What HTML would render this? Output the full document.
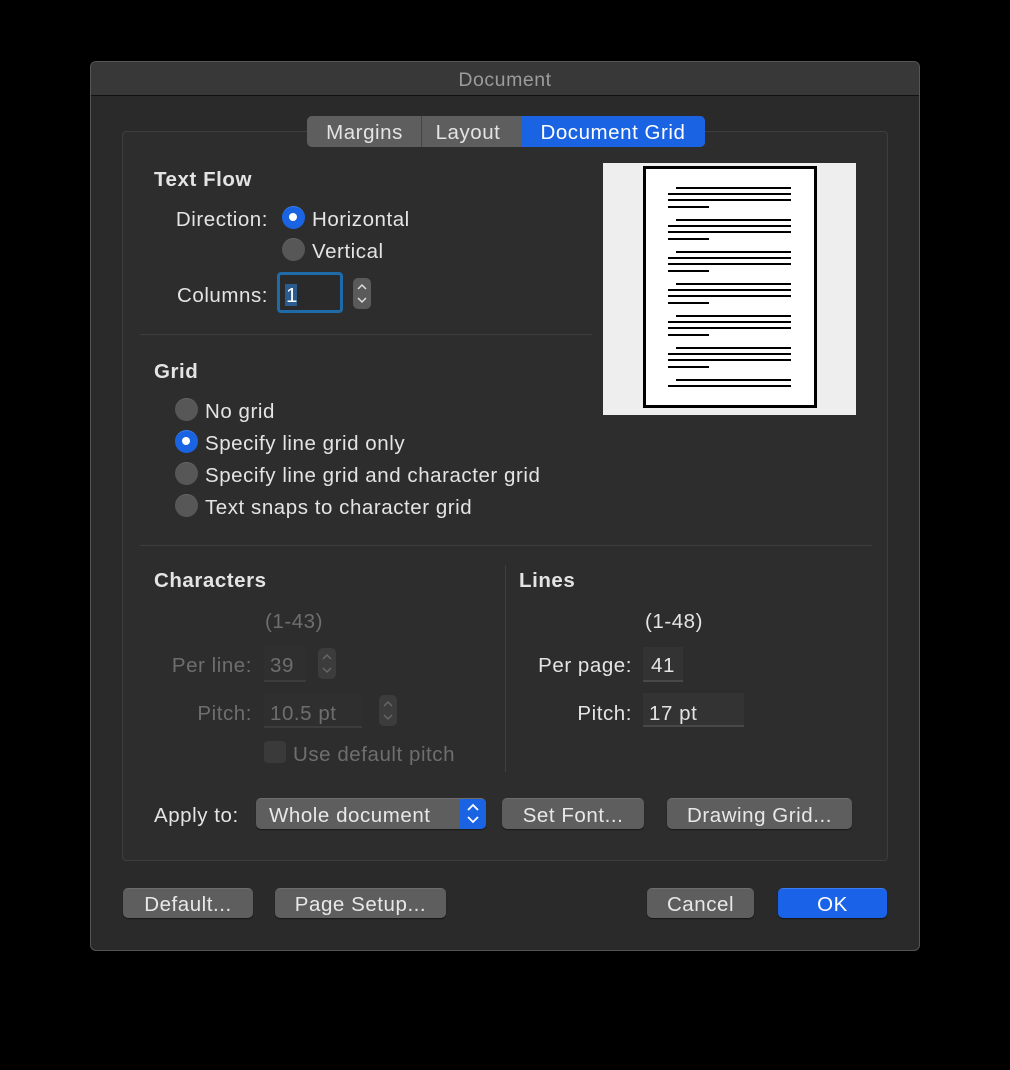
<!DOCTYPE html>
<html><head><meta charset="utf-8"><style>
*{margin:0;padding:0;box-sizing:border-box}
body{width:1010px;height:1070px;background:#000;position:relative;overflow:hidden;font-family:"Liberation Sans",sans-serif;font-size:20.5px;letter-spacing:0.55px;color:#e4e4e4}
.a{position:absolute;white-space:nowrap;line-height:22px;margin-top:2px}
.s{position:absolute}
.r{text-align:right}
.b{font-weight:bold}
.g{color:#6e6e6e}
.btn{position:absolute;background:#5e5e5e;border-radius:5px;text-align:center;color:#e8e8e8;box-shadow:0 1px 1px rgba(0,0,0,.5);border-top:1px solid #6e6e6e;padding-top:1px}
.rad{position:absolute;width:23px;height:23px;border-radius:50%;background:#575757;border-top:1px solid #666}
.rad.on{background:#1a63e3;border-top-color:#3b7ff0}
.rad.on::after{content:"";position:absolute;left:7px;top:6px;width:8px;height:8px;border-radius:50%;background:#fff}
.fld{position:absolute;background:#333;border-bottom:2px solid #484848}
.stp{position:absolute;background:#5a5a5a;border-radius:5px}
.sep{position:absolute;height:1px;background:#3c3c3c}
</style></head><body>
<div style="position:absolute;left:90px;top:61px;width:830px;height:890px;background:#2a2a2a;border:1px solid #555;border-radius:6px;overflow:hidden">
 <div style="position:absolute;left:0;top:0;width:100%;height:34px;background:#383838;border-bottom:1px solid #111"></div>
</div>
<div class="a" style="left:0;width:1010px;text-align:center;top:67px;color:#9c9c9c;font-size:19.5px">Document</div>
<div style="position:absolute;left:122px;top:131px;width:766px;height:730px;background:#2d2d2d;border:1px solid #3e3e3e;border-radius:4px"></div>
<!-- tabs -->
<div style="position:absolute;left:307px;top:116px;width:398px;height:31px;background:#5e5e5e;border-radius:5px;overflow:hidden">
 <div style="position:absolute;left:114px;top:0;width:1px;height:31px;background:#454545"></div>
 <div style="position:absolute;left:214px;top:0;width:184px;height:31px;background:#1a63e3"></div>
</div>
<div class="a" style="left:307px;width:115px;text-align:center;top:120px">Margins</div>
<div class="a" style="left:422px;width:92px;text-align:center;top:120px">Layout</div>
<div class="a" style="left:521px;width:184px;text-align:center;top:120px;color:#fff">Document Grid</div>
<!-- Text flow -->
<div class="a b" style="left:154px;top:167px">Text Flow</div>
<div class="a r" style="left:100px;width:168px;top:207px">Direction:</div>
<div class="rad on" style="left:282px;top:206px"></div>
<div class="a" style="left:312px;top:207px">Horizontal</div>
<div class="rad" style="left:282px;top:238px"></div>
<div class="a" style="left:312px;top:239px">Vertical</div>
<div class="a r" style="left:100px;width:168px;top:283px">Columns:</div>
<div style="position:absolute;left:277px;top:272px;width:66px;height:41px;border:3px solid #1f6aa8;border-radius:4px;background:#2a2a2a"></div>
<div style="position:absolute;left:285px;top:284px;width:12px;height:22px;background:#2b5c90"></div>
<div class="a" style="left:286px;top:283px;color:#fff">1</div>
<div class="stp" style="left:353px;top:278px;width:18px;height:31px"></div>
<svg class="s" style="left:353px;top:278px" width="18" height="31"><path d="M5 11l4-4 4 4M5 20l4 4 4-4" stroke="#ddd" stroke-width="1.5" fill="none"/></svg>
<div class="sep" style="left:140px;top:334px;width:452px"></div>
<!-- preview -->
<div style="position:absolute;left:603px;top:163px;width:253px;height:252px;background:#eeeeee"></div>
<div style="position:absolute;left:643px;top:166px;width:174px;height:242px;background:#fff;border:3px solid #000"></div>
<svg style="position:absolute;left:0;top:0" width="1010" height="1070" stroke="#000" stroke-width="2">
<g id="gp">
<path d="M676 188H791M668 194H791M668 200H791M668 207H709"/>
</g>
<use href="#gp" y="32"/><use href="#gp" y="64"/><use href="#gp" y="96"/><use href="#gp" y="128"/><use href="#gp" y="160"/>
<path d="M676 380H791M668 386H791"/>
</svg>
<!-- Grid -->
<div class="a b" style="left:154px;top:359px">Grid</div>
<div class="rad" style="left:175px;top:398px"></div><div class="a" style="left:205px;top:399px">No grid</div>
<div class="rad on" style="left:175px;top:430px"></div><div class="a" style="left:205px;top:431px">Specify line grid only</div>
<div class="rad" style="left:175px;top:462px"></div><div class="a" style="left:205px;top:463px">Specify line grid and character grid</div>
<div class="rad" style="left:175px;top:494px"></div><div class="a" style="left:205px;top:495px">Text snaps to character grid</div>
<div class="sep" style="left:140px;top:545px;width:732px"></div>
<!-- Characters -->
<div class="a b" style="left:154px;top:568px">Characters</div>
<div class="a b" style="left:519px;top:568px">Lines</div>
<div style="position:absolute;left:505px;top:565px;width:1px;height:207px;background:#3e3e3e"></div>
<div class="a g" style="left:265px;top:609px">(1-43)</div>
<div class="a r g" style="left:100px;width:152px;top:653px">Per line:</div>
<div class="fld" style="left:264px;top:647px;width:42px;height:35px;background:#2f2f2f;border-bottom-color:#3c3c3c"></div>
<div class="a g" style="left:270px;top:653px">39</div>
<div class="stp" style="left:318px;top:648px;width:18px;height:31px;background:#3c3c3c"></div>
<svg class="s" style="left:318px;top:648px" width="18" height="31"><path d="M5 11l4-4 4 4M5 20l4 4 4-4" stroke="#666" stroke-width="1.5" fill="none"/></svg>
<div class="a r g" style="left:100px;width:152px;top:701px">Pitch:</div>
<div class="fld" style="left:264px;top:695px;width:98px;height:33px;background:#2f2f2f;border-bottom-color:#3c3c3c"></div>
<div class="a g" style="left:270px;top:701px">10.5 pt</div>
<div class="stp" style="left:379px;top:695px;width:18px;height:31px;background:#3c3c3c"></div>
<svg class="s" style="left:379px;top:695px" width="18" height="31"><path d="M5 11l4-4 4 4M5 20l4 4 4-4" stroke="#666" stroke-width="1.5" fill="none"/></svg>
<div style="position:absolute;left:264px;top:741px;width:22px;height:22px;border-radius:4px;background:#3a3a3a"></div>
<div class="a g" style="left:293px;top:742px">Use default pitch</div>
<div class="a" style="left:645px;top:609px">(1-48)</div>
<div class="a r" style="left:480px;width:152px;top:653px">Per page:</div>
<div class="fld" style="left:643px;top:647px;width:40px;height:35px"></div>
<div class="a" style="left:651px;top:653px">41</div>
<div class="a r" style="left:480px;width:152px;top:701px">Pitch:</div>
<div class="fld" style="left:643px;top:693px;width:101px;height:34px"></div>
<div class="a" style="left:649px;top:701px">17 pt</div>
<!-- apply -->
<div class="a" style="left:154px;top:803px">Apply to:</div>
<div class="btn" style="left:256px;top:798px;width:230px;height:31px;text-align:left;padding-left:13px;line-height:31px;overflow:hidden">Whole document<div style="position:absolute;right:0;top:0;width:26px;height:31px;background:#1a63e3"></div></div>
<svg class="s" style="left:460px;top:798px" width="26" height="31"><path d="M8 12l5-5 5 5M8 19l5 5 5-5" stroke="#fff" stroke-width="1.8" fill="none"/></svg>
<div class="btn" style="left:502px;top:798px;width:142px;height:31px;line-height:31px">Set Font...</div>
<div class="btn" style="left:667px;top:798px;width:185px;height:31px;line-height:31px">Drawing Grid...</div>
<!-- bottom -->
<div class="btn" style="left:123px;top:888px;width:130px;height:30px;line-height:30px">Default...</div>
<div class="btn" style="left:275px;top:888px;width:171px;height:30px;line-height:30px">Page Setup...</div>
<div class="btn" style="left:647px;top:888px;width:107px;height:30px;line-height:30px">Cancel</div>
<div class="btn" style="left:778px;top:888px;width:109px;height:30px;line-height:30px;background:#1a63e8;border-top-color:#3a7df0;color:#fff">OK</div>
</body></html>
